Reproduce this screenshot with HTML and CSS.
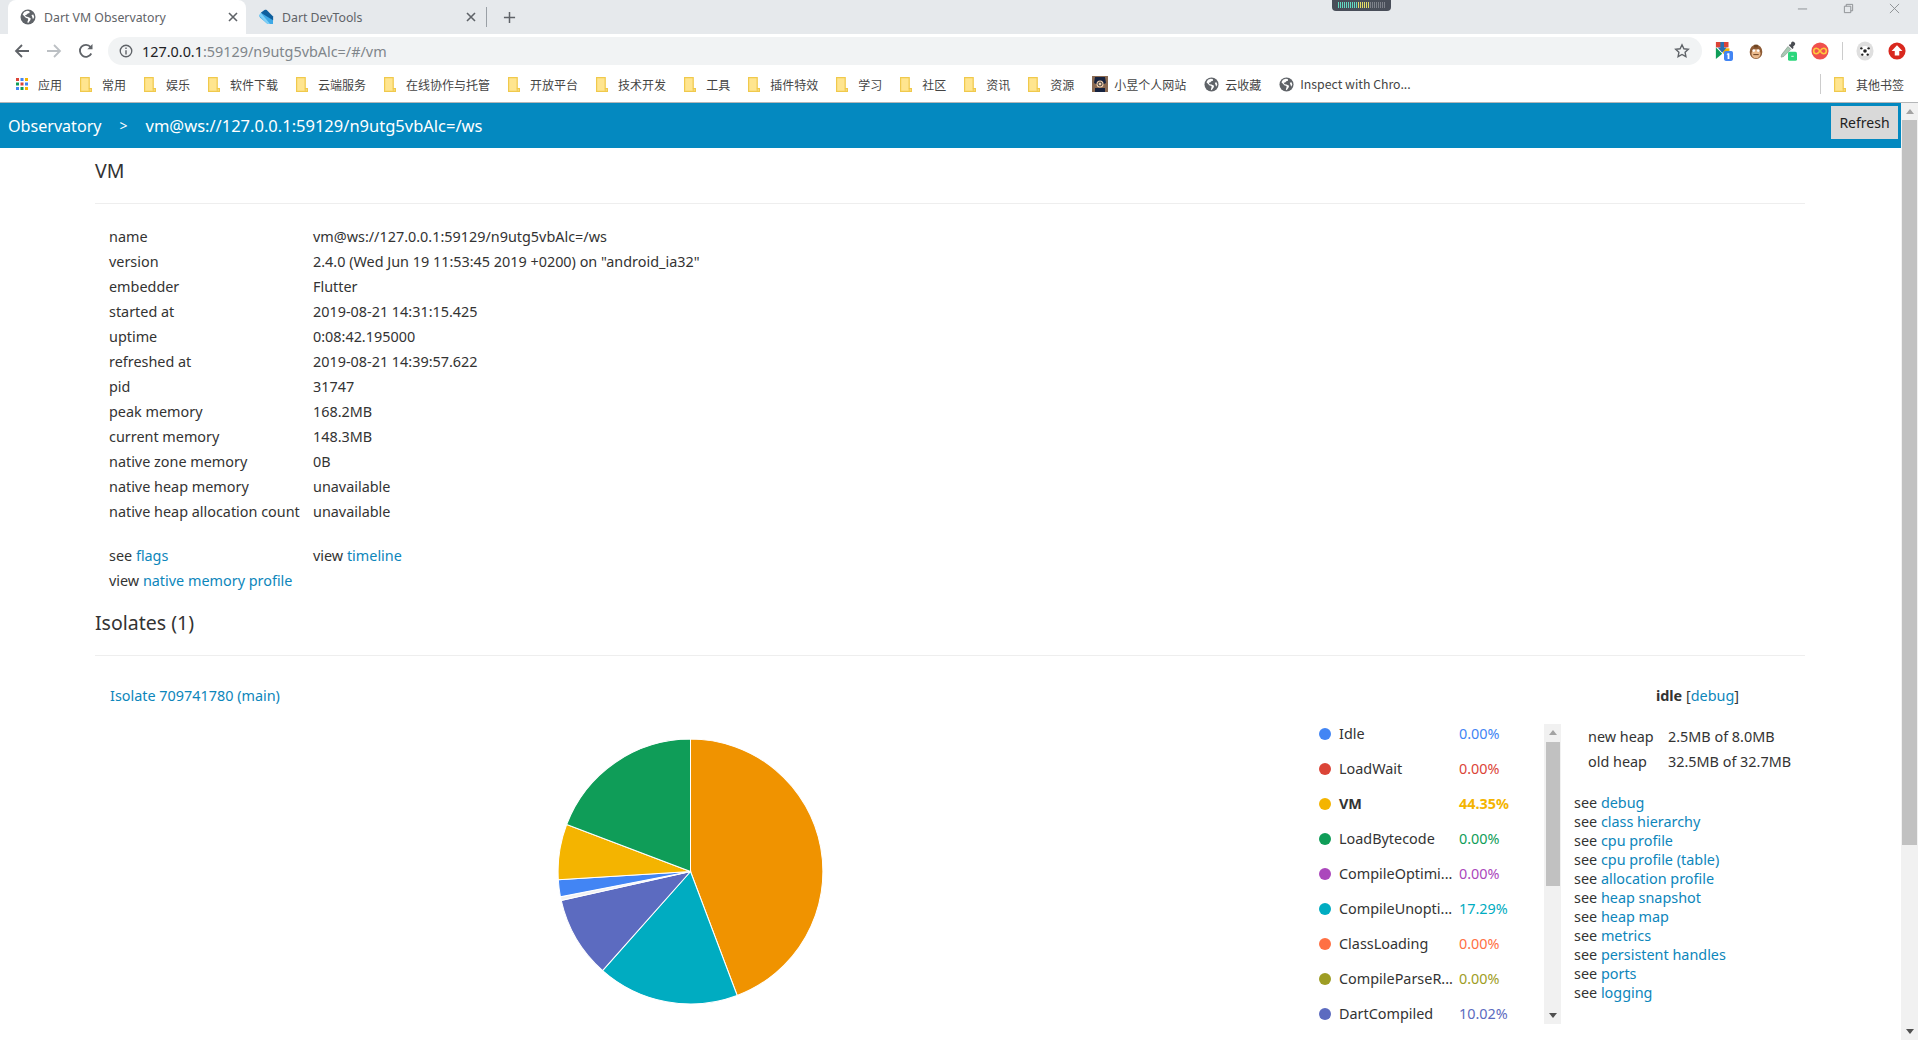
FILE: index.html
```html
<!DOCTYPE html>
<html lang="zh">
<head>
<meta charset="utf-8">
<title>Dart VM Observatory</title>
<link rel="stylesheet" href="styles.css">
</head>
<body>
<svg class="defs" width="0" height="0" aria-hidden="true">
  <symbol id="globe" viewBox="0 0 16 16">
    <circle cx="8" cy="8" r="7.5" fill="#5f6368"/>
    <path fill="#fff" d="M7 1.8 4.2 3 2.6 5.6 6 9l1.6.2.6 1.2-.9 2.8.9.9 2.2-3.2.3-1.6-2.6-1.2L6 7.6 5 6.2l1.6-.4L7.8 4.6l1.8-.6-.2-1.8zM11.5 6l1.8-.5.9 2.4-1.2 2.4-.8-2.2z"/>
  </symbol>
  <symbol id="folder" viewBox="0 0 12 15">
    <path fill="#ffe58f" stroke="#f0c94c" stroke-width="1.2" d="M.6.6h8.6v11h2.2v2.8H.6z"/>
    <path fill="none" stroke="#f0c94c" stroke-width="1" d="M9.2 11.6v2.8"/>
  </symbol>
  <symbol id="x" viewBox="0 0 12 12">
    <path fill="none" stroke="#5f6368" stroke-width="1.6" d="M2 2l8 8M10 2l-8 8"/>
  </symbol>
</svg>

<header class="chrome">
  <div class="tabstrip">
    <div class="tab tab-active">
      <svg class="tab-ico"><use href="#globe"/></svg>
      <span class="tab-title">Dart VM Observatory</span>
      <svg class="tab-x"><use href="#x"/></svg>
    </div>
    <div class="tab">
      <svg class="tab-ico" viewBox="0 0 16 16">
        <path fill="#3ea9e6" d="M1 6.500 6.500 1l8.500 8.500V15H9.500L2 8.500z"/>
        <path fill="#0d5f9e" d="M2.800 3.800 6.600.9c.7-.4 1.500-.3 2.100.2l6.400 6.400v3.700z"/>
        <path fill="#7fd0f7" d="M1 6.500l1.800-2.700L12 15H9.500z"/>
      </svg>
      <span class="tab-title">Dart DevTools</span>
      <svg class="tab-x"><use href="#x"/></svg>
    </div>
    <span class="tab-sep"></span>
    <svg class="tab-new" viewBox="0 0 14 14"><path fill="none" stroke="#5f6368" stroke-width="1.6" d="M7 1v12M1 7h12"/></svg>
    <div class="winctl">
      <svg class="win-ico" viewBox="0 0 12 12"><path stroke="#8a8d91" fill="none" d="M1 6.500h10"/></svg>
      <svg class="win-ico" viewBox="0 0 12 12"><path stroke="#8a8d91" fill="none" d="M1.500 3.500h7v7h-7zM3.500 3.500v-2h7v7h-2"/></svg>
      <svg class="win-ico" viewBox="0 0 12 12"><path stroke="#8a8d91" fill="none" d="M1 1l10 10M11 1 1 11"/></svg>
    </div>
  </div>
  <div class="meter"><span class="meter-bars"></span></div>

  <div class="toolbar">
    <svg class="nav-ico" viewBox="0 0 16 16"><path fill="none" stroke="#5f6368" stroke-width="1.8" d="M15 8H2M8 2 2 8l6 6"/></svg>
    <svg class="nav-ico" viewBox="0 0 16 16"><path fill="none" stroke="#bcc0c4" stroke-width="1.8" d="M1 8h13M8 2l6 6-6 6"/></svg>
    <svg class="nav-ico" viewBox="0 0 16 16"><path fill="none" stroke="#5f6368" stroke-width="1.8" d="M13.300 10.500A6 6 0 1 1 12.600 4"/><path fill="#5f6368" d="M14.500 1v5.200H9.300z"/></svg>
    <div class="omnibox">
      <svg class="info-ico" viewBox="0 0 16 16"><circle cx="8" cy="8" r="6.600" fill="none" stroke="#5f6368" stroke-width="1.500"/><path fill="#5f6368" d="M7.200 7h1.600v5H7.200zM7.200 4h1.600v1.700H7.200z"/></svg>
      <span class="url"><span class="url-host">127.0.0.1</span>:59129/n9utg5vbAlc=/#/vm</span>
      <svg class="star-ico" viewBox="0 0 16 16"><path fill="none" stroke="#5f6368" stroke-width="1.400" d="M8 1.800l1.900 4 4.400.5-3.200 3 .8 4.400L8 11.500l-3.900 2.200.8-4.400-3.200-3 4.400-.5z"/></svg>
    </div>
    <div class="extensions">
      <svg class="ext" viewBox="0 0 20 22">
        <path fill="#db4437" d="M1 1h14v6H1z"/><path fill="#0f9d58" d="M1 7l7 7-7 6z"/><path fill="#f4b400" d="M9 8h7v6H9z"/>
        <path fill="#2a6fb0" d="M6 1h4v6h3l-5 6-5-6h3z"/>
        <rect x="10" y="11" width="10" height="11" rx="2" fill="#4285f4"/><path fill="#fff" d="M14 13.500h2v6.500h-2zM12.800 14.800l1.200-1.300v1.800z"/>
      </svg>
      <svg class="ext" viewBox="0 0 20 22">
        <ellipse cx="10" cy="12" rx="7" ry="8" fill="#8d5a34"/><ellipse cx="10" cy="14" rx="5" ry="5" fill="#e9b98c"/><circle cx="7.500" cy="10.500" r="1.500" fill="#fff"/><circle cx="12.500" cy="10.500" r="1.500" fill="#fff"/><path stroke="#5c3317" d="M7 15h6" fill="none"/><path fill="#6d4422" d="M8 4h4v3H8z"/>
      </svg>
      <svg class="ext" viewBox="0 0 22 24">
        <path fill="#4a4d52" d="M15 1.500a2.500 2.500 0 0 1 4 3.500l-2 2 1 1-1.500 1.500-4.500-4.500 1.500-1.500 1 1z"/>
        <path fill="#a8c9b4" stroke="#6d7a72" stroke-width=".6" d="M11 6.500l3.500 3.500L6 18.500l-3 1-.5-.5 1-3z"/>
        <rect x="11" y="13" width="11" height="11" rx="2" fill="#2bd67b"/><path stroke="#fff" d="M15 18.500h3" fill="none"/>
      </svg>
      <svg class="ext" viewBox="0 0 20 20">
        <circle cx="10" cy="10" r="9.500" fill="#f0504d"/><path fill="none" stroke="#ffc83d" stroke-width="1.800" d="M10 10c-1.500-2-2.500-3-4-3a3 3 0 0 0 0 6c1.500 0 2.500-1 4-3s2.500-3 4-3a3 3 0 0 1 0 6c-1.500 0-2.500-1-4-3z"/>
      </svg>
      <span class="ext-sep"></span>
      <svg class="ext" viewBox="0 0 20 22">
        <ellipse cx="10" cy="11" rx="9.500" ry="10.500" fill="#dfdfdf"/><circle cx="10" cy="11" r="5.500" fill="#fff"/><circle cx="10" cy="11" r="2" fill="#222"/><circle cx="6" cy="8" r="1.300" fill="#222"/><circle cx="14" cy="8" r="1.300" fill="#222"/><circle cx="7" cy="15" r="1.300" fill="#222"/><circle cx="13" cy="15" r="1.300" fill="#222"/>
      </svg>
      <svg class="ext" viewBox="0 0 20 20">
        <circle cx="10" cy="10" r="9.500" fill="#d9281e"/><path fill="#fff" d="M10 3.500 16 10h-3.500v5h-5v-5H4z"/>
      </svg>
    </div>
  </div>

  <nav class="bookmarks">
    <a class="bm bm-apps">
      <svg class="apps-ico" viewBox="0 0 12 12">
        <path fill="#db4437" d="M0 0h3v3H0z"/><path fill="#4285f4" d="M4.500 0h3v3h-3z"/><path fill="#f4b400" d="M9 0h3v3H9z"/>
        <path fill="#0f9d58" d="M0 4.500h3v3H0z"/><path fill="#db4437" d="M4.500 4.500h3v3h-3z"/><path fill="#4285f4" d="M9 4.500h3v3H9z"/>
        <path fill="#4285f4" d="M0 9h3v3H0z"/><path fill="#0f9d58" d="M4.500 9h3v3h-3z"/><path fill="#f4b400" d="M9 9h3v3H9z"/>
      </svg>应用</a>
    <a class="bm"><svg class="bm-folder"><use href="#folder"/></svg>常用</a>
    <a class="bm"><svg class="bm-folder"><use href="#folder"/></svg>娱乐</a>
    <a class="bm"><svg class="bm-folder"><use href="#folder"/></svg>软件下载</a>
    <a class="bm"><svg class="bm-folder"><use href="#folder"/></svg>云端服务</a>
    <a class="bm"><svg class="bm-folder"><use href="#folder"/></svg>在线协作与托管</a>
    <a class="bm"><svg class="bm-folder"><use href="#folder"/></svg>开放平台</a>
    <a class="bm"><svg class="bm-folder"><use href="#folder"/></svg>技术开发</a>
    <a class="bm"><svg class="bm-folder"><use href="#folder"/></svg>工具</a>
    <a class="bm"><svg class="bm-folder"><use href="#folder"/></svg>插件特效</a>
    <a class="bm"><svg class="bm-folder"><use href="#folder"/></svg>学习</a>
    <a class="bm"><svg class="bm-folder"><use href="#folder"/></svg>社区</a>
    <a class="bm"><svg class="bm-folder"><use href="#folder"/></svg>资讯</a>
    <a class="bm"><svg class="bm-folder"><use href="#folder"/></svg>资源</a>
    <a class="bm">
      <svg class="bm-avatar" viewBox="0 0 16 16"><path fill="#8a6a52" d="M0 0h16v16H0z"/><path fill="#17233f" d="M3 1h10l1 6-2 1H4L2 7zM3 12h10v4H3z"/><circle cx="8" cy="8" r="3.500" fill="#f0cfb0"/><circle cx="8" cy="8" r="2" fill="none" stroke="#333"/></svg>小昱个人网站</a>
    <a class="bm"><svg class="bm-globe"><use href="#globe"/></svg>云收藏</a>
    <a class="bm bm-inspect"><svg class="bm-globe"><use href="#globe"/></svg>Inspect with Chro...</a>
    <span class="bm-spacer"></span>
    <span class="bm-sep"></span>
    <a class="bm bm-last"><svg class="bm-folder"><use href="#folder"/></svg>其他书签</a>
  </nav>
</header>

<div class="viewport">
  <div class="page">
    <div class="navbar">
      <span class="crumb-home">Observatory</span>
      <span class="crumb-sep">&gt;</span>
      <span class="crumb">vm@ws://127.0.0.1:59129/n9utg5vbAlc=/ws</span>
      <button class="refresh">Refresh</button>
    </div>
    <main class="content">
      <h1 class="title">VM</h1>
      <hr class="rule">
      <div class="members">
        <span>name</span><span>vm@ws://127.0.0.1:59129/n9utg5vbAlc=/ws</span>
        <span>version</span><span>2.4.0 (Wed Jun 19 11:53:45 2019 +0200) on "android_ia32"</span>
        <span>embedder</span><span>Flutter</span>
        <span>started at</span><span>2019-08-21 14:31:15.425</span>
        <span>uptime</span><span>0:08:42.195000</span>
        <span>refreshed at</span><span>2019-08-21 14:39:57.622</span>
        <span>pid</span><span>31747</span>
        <span>peak memory</span><span>168.2MB</span>
        <span>current memory</span><span>148.3MB</span>
        <span>native zone memory</span><span>0B</span>
        <span>native heap memory</span><span>unavailable</span>
        <span>native heap allocation count</span><span>unavailable</span>
      </div>
      <div class="members links">
        <span>see <a>flags</a></span><span>view <a>timeline</a></span>
        <span class="wide">view <a>native memory profile</a></span>
      </div>
      <h1 class="title title-iso">Isolates (1)</h1>
      <hr class="rule">
      <div class="iso-head">
        <a>Isolate 709741780 (main)</a>
        <span class="iso-state"><b>idle</b> [<a>debug</a>]</span>
      </div>
      <div class="iso-body">
        <div class="pie-wrap">
          <svg class="pie" viewBox="-134 -134 268 268">
            <g stroke="#fff" stroke-width="1">
              <path fill="#f09300" d="M0 0V-132A132 132 0 0 1 46.500 123.500Z"/>
              <path fill="#00acc1" d="M0 0 46.500 123.500A132 132 0 0 1 -87.600 98.700Z"/>
              <path fill="#5c6bc0" d="M0 0 -87.600 98.700A132 132 0 0 1 -128.800 28.800Z"/>
              <path fill="#f2f2f2" d="M0 0 -128.800 28.800A132 132 0 0 1 -129.600 25.200Z"/>
              <path fill="#4285f4" d="M0 0 -129.600 25.200A132 132 0 0 1 -131.700 8.300Z"/>
              <path fill="#f4b400" d="M0 0 -131.700 8.300A132 132 0 0 1 -123.400 -46.800Z"/>
              <path fill="#0f9d58" d="M0 0 -123.400 -46.800A132 132 0 0 1 0 -132Z"/>
            </g>
          </svg>
        </div>
        <ul class="legend">
          <li class="lg"><i class="dot c1"></i><span class="lg-name">Idle</span><span class="lg-val t1">0.00%</span></li>
          <li class="lg"><i class="dot c2"></i><span class="lg-name">LoadWait</span><span class="lg-val t2">0.00%</span></li>
          <li class="lg lg-bold"><i class="dot c3"></i><span class="lg-name">VM</span><span class="lg-val t3">44.35%</span></li>
          <li class="lg"><i class="dot c4"></i><span class="lg-name">LoadBytecode</span><span class="lg-val t4">0.00%</span></li>
          <li class="lg"><i class="dot c5"></i><span class="lg-name">CompileOptimi...</span><span class="lg-val t5">0.00%</span></li>
          <li class="lg"><i class="dot c6"></i><span class="lg-name">CompileUnopti...</span><span class="lg-val t6">17.29%</span></li>
          <li class="lg"><i class="dot c7"></i><span class="lg-name">ClassLoading</span><span class="lg-val t7">0.00%</span></li>
          <li class="lg"><i class="dot c8"></i><span class="lg-name">CompileParseR...</span><span class="lg-val t8">0.00%</span></li>
          <li class="lg"><i class="dot c9"></i><span class="lg-name">DartCompiled</span><span class="lg-val t9">10.02%</span></li>
        </ul>
        <div class="legend-bar">
          <span class="arrow-up"></span>
          <span class="legend-thumb"></span>
          <span class="legend-track"></span>
          <span class="arrow-down"></span>
        </div>
        <aside class="iso-side">
          <div class="heap">
            <span>new heap</span><span>2.5MB of 8.0MB</span>
            <span>old heap</span><span>32.5MB of 32.7MB</span>
          </div>
          <ul class="see">
            <li>see <a>debug</a></li>
            <li>see <a>class hierarchy</a></li>
            <li>see <a>cpu profile</a></li>
            <li>see <a>cpu profile (table)</a></li>
            <li>see <a>allocation profile</a></li>
            <li>see <a>heap snapshot</a></li>
            <li>see <a>heap map</a></li>
            <li>see <a>metrics</a></li>
            <li>see <a>persistent handles</a></li>
            <li>see <a>ports</a></li>
            <li>see <a>logging</a></li>
          </ul>
        </aside>
      </div>
    </main>
  </div>
  <div class="page-bar">
    <span class="arrow-up"></span>
    <span class="page-thumb"></span>
    <span class="page-track"></span>
    <span class="arrow-down"></span>
  </div>
</div>
</body>
</html>
```

FILE: styles.css
```css
* { box-sizing: border-box; }
html, body { margin: 0; height: 100%; overflow: hidden; }
body {
  display: flex;
  flex-direction: column;
  position: relative;
  background: #fff;
  color: #333;
  font-family: "Noto Sans", "Noto Sans CJK SC", sans-serif;
  font-size: 14.4px;
}
.defs { position: absolute; }
a { color: #0d86bb; text-decoration: none; }
ul { margin: 0; padding: 0; list-style: none; }

/* browser chrome */
.chrome { flex: none; }
.tabstrip {
  height: 34px;
  background: #e6e9ec;
  display: flex;
  align-items: stretch;
  padding-left: 8px;
}
.tab {
  width: 238px;
  display: flex;
  align-items: center;
  padding-left: 12px;
  font-size: 12.3px;
  color: #5f6368;
}
.tab-active { background: #fff; border-radius: 8px 8px 0 0; }
.tab-ico { width: 16px; height: 16px; flex: none; }
.tab-title { margin-left: 8px; flex: 1; }
.tab-x { width: 12px; height: 12px; margin-right: 7px; }
.tab-sep { width: 1px; height: 20px; background: #9aa0a6; align-self: center; margin-left: 2px; }
.tab-new { width: 13px; height: 13px; align-self: center; margin-left: 16px; }
.winctl { margin-left: auto; display: flex; align-items: center; gap: 35px; padding: 0 18px 18px 0; }
.win-ico { width: 11px; height: 11px; }
.meter {
  position: absolute;
  left: 1332px;
  top: 0;
  width: 59px;
  height: 11px;
  background: #494e59;
  border-radius: 0 0 4px 4px;
  padding: 2px 6px;
}
.meter-bars {
  display: block;
  height: 6px;
  background: repeating-linear-gradient(90deg, transparent 0 1px, #494e59 1px 2px),
    linear-gradient(90deg, #62d9c0 0 40%, #e3dc66 40% 68%, #7d818a 68%);
}

.toolbar {
  height: 34px;
  display: flex;
  align-items: center;
  padding-left: 14px;
  gap: 16px;
  background: #fff;
}
.nav-ico { width: 16px; height: 16px; flex: none; }
.omnibox {
  flex: none;
  width: 1594px;
  height: 28px;
  margin-left: -2px;
  background: #f1f3f4;
  border-radius: 14px;
  display: flex;
  align-items: center;
  padding: 0 10px 0 11px;
}
.info-ico { width: 14px; height: 14px; flex: none; }
.url { margin-left: 9px; font-size: 14.4px; color: #80868b; flex: 1; }
.url-host { color: #202124; }
.star-ico { width: 16px; height: 16px; margin-right: 2px; }
.extensions { display: flex; align-items: center; gap: 14px; margin-left: -3px; }
.ext { width: 18px; height: 20px; flex: none; }
.ext-sep { width: 1px; height: 18px; background: #ccc; margin: 0 -1px; }

.bookmarks {
  height: 35px;
  display: flex;
  align-items: center;
  gap: 18px;
  padding: 0 0 2px 16px;
  border-bottom: 1px solid #b4b6b8;
  background: #fff;
  font-family: "Noto Sans CJK SC", "Noto Sans", sans-serif;
  font-size: 12px;
  color: #444;
}
.bm { display: flex; align-items: center; color: #444; white-space: nowrap; }
.bm-folder { width: 12px; height: 15px; margin-right: 10px; }
.apps-ico { width: 12px; height: 12px; margin-right: 10px; }
.bm-avatar { width: 16px; height: 16px; margin-right: 6px; }
.bm-globe { width: 15px; height: 15px; margin-right: 6px; }
.bm-inspect { font-size: 12.3px; }
.bm-spacer { flex: 1; }
.bm-sep { width: 1px; height: 20px; background: #ccc; margin: 0 -5px 0 0; }
.bm-last { padding-right: 14px; }

/* page */
.viewport { flex: 1; display: flex; min-height: 0; }
.page { flex: 1; min-width: 0; overflow: hidden; }
.navbar {
  height: 45px;
  background: #0489c0;
  color: #fff;
  display: flex;
  align-items: center;
  padding-left: 8px;
  font-size: 16.5px;
}
.crumb-home { font-size: 16.1px; }
.crumb-sep { margin: 0 18px; font-size: 14px; }
.refresh {
  margin-left: auto;
  margin-right: 3px;
  align-self: flex-start;
  margin-top: 3px;
  width: 67px;
  height: 33px;
  border: 0;
  padding: 0;
  background: #d9d9d9;
  color: #222;
  font: 14px "Noto Sans", sans-serif;
}
.content { padding: 0 96px 0 95px; }
.title { margin: 0; font-weight: 400; font-size: 19.5px; line-height: 26px; padding-top: 10px; color: #333; }
.title-iso { padding-top: 0; margin-top: 17px; }
.rule { border: 0; border-top: 1px solid #eee; margin: 19px 0 0; }
.members {
  display: grid;
  grid-template-columns: 204px auto;
  justify-content: start;
  grid-auto-rows: 25px;
  align-items: center;
  padding: 20px 0 0 14px;
}
.links { padding-top: 19px; }
.wide { grid-column: 1 / -1; }
.iso-head {
  display: flex;
  justify-content: space-between;
  margin-top: 29px;
  padding: 0 0 0 15px;
  line-height: 22px;
}
.iso-state { margin-right: 66px; }
.iso-state b { font-weight: 700; }
.iso-body { display: flex; align-items: flex-start; margin-top: 17px; }
.pie-wrap { flex: none; width: 1219px; padding: 0 0 0 461px; margin-top: 13px; }
.pie { display: block; width: 269px; height: 269px; }
.legend { flex: none; width: 225px; height: 300px; margin: -8px 0 0 5px; }
.lg { height: 35px; display: flex; align-items: center; white-space: nowrap; }
.lg-bold { font-weight: 700; }
.dot { width: 12px; height: 12px; border-radius: 50%; margin-right: 8px; flex: none; }
.lg-name { width: 120px; }
.c1 { background: #4285f4; } .t1 { color: #4285f4; }
.c2 { background: #db4437; } .t2 { color: #db4437; }
.c3 { background: #f4b400; } .t3 { color: #f4b400; }
.c4 { background: #0f9d58; } .t4 { color: #0f9d58; }
.c5 { background: #ab47bc; } .t5 { color: #ab47bc; }
.c6 { background: #00acc1; } .t6 { color: #00acc1; }
.c7 { background: #ff7043; } .t7 { color: #ff7043; }
.c8 { background: #9e9d24; } .t8 { color: #9e9d24; }
.c9 { background: #5c6bc0; } .t9 { color: #5c6bc0; }
.legend-bar {
  flex: none;
  width: 17px;
  height: 300px;
  background: #f1f1f1;
  display: flex;
  flex-direction: column;
  align-items: center;
}
.legend-thumb { width: 14px; height: 144px; background: #c1c1c1; margin-top: 1px; }
.legend-track { flex: 1; }
.arrow-up, .arrow-down {
  flex: none;
  width: 0;
  height: 0;
  border-left: 4px solid transparent;
  border-right: 4px solid transparent;
  margin: 6px 0;
}
.arrow-up { border-bottom: 5px solid #a3a3a3; }
.arrow-down { border-top: 5px solid #505050; }
.iso-side { flex: none; width: 230px; padding: 0 0 0 13px; white-space: nowrap; }
.heap {
  display: grid;
  grid-template-columns: 80px auto;
  justify-content: start;
  grid-auto-rows: 25px;
  align-items: center;
  padding-left: 14px;
}
.see { margin-top: 19px; }
.see li { height: 19px; line-height: 19px; white-space: nowrap; }

.page-bar {
  flex: none;
  width: 17px;
  background: #f1f1f1;
  display: flex;
  flex-direction: column;
  align-items: center;
}
.page-thumb { width: 15px; height: 725px; background: #c1c1c1; }
.page-track { flex: 1; }
```
